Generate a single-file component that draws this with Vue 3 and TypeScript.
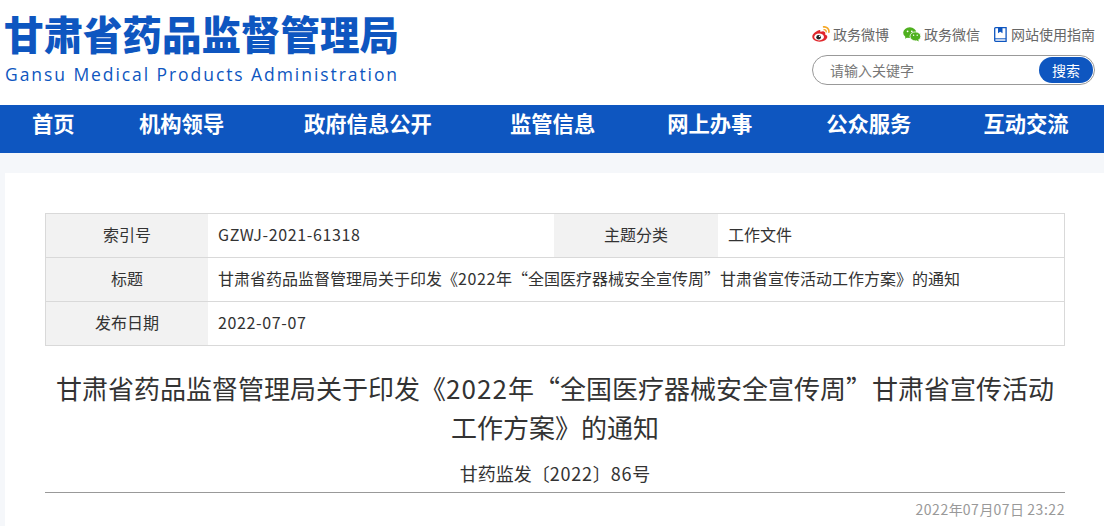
<template>
  <div class="page" lang="zh-CN">
    <header class="top">
      <div class="logo">
        <div class="logo-cn">甘肃省药品监督管理局</div>
        <div class="logo-en">Gansu Medical Products Administration</div>
      </div>
      <div class="tools">
        <div class="links">
          <a class="link">
            <svg width="18" height="16" viewBox="0 0 18 16">
              <path d="M6.800 4.300C3.200 5.500.3 8.300.3 10.800c0 2.900 3.300 4.900 7.300 4.900 4.300 0 7.700-2.400 7.700-4.900 0-1.500-1.300-2.100-2.300-2.400.6-1.400.5-2.600-1.300-3-1.200-.2-2.500.3-3.300.7.300-1.300-.4-2.500-1.600-1.800z" fill="#e0272c"/>
              <ellipse cx="7.100" cy="10.900" rx="4.900" ry="3.500" fill="#fff"/>
              <circle cx="6.600" cy="11.200" r="2.300" fill="#222"/>
              <circle cx="7.500" cy="10.400" r=".7" fill="#fff"/>
              <path d="M11.600.9c3-.4 5.800 2 5.300 5.200" fill="none" stroke="#f5a623" stroke-width="1.600" stroke-linecap="round"/>
              <path d="M12 3.700c1.300-.2 2.400.9 2.200 2.200" fill="none" stroke="#f5a623" stroke-width="1.300" stroke-linecap="round"/>
            </svg>
            <span>政务微博</span>
          </a>
          <a class="link">
            <svg width="18" height="15" viewBox="0 0 18 15">
              <ellipse cx="6.800" cy="5.700" rx="6.600" ry="5.400" fill="#4fb01f"/>
              <path d="M2.600 9l-.6 2.800 3-1.700z" fill="#4fb01f"/>
              <ellipse cx="12.400" cy="9.400" rx="5.400" ry="4.500" fill="#4fb01f" stroke="#fff" stroke-width=".8"/>
              <path d="M15 12.500l1 2-2.600-1.200z" fill="#4fb01f"/>
              <circle cx="4.600" cy="4.300" r=".9" fill="#fff"/>
              <circle cx="8.800" cy="4.300" r=".9" fill="#fff"/>
              <circle cx="10.600" cy="8.300" r=".7" fill="#fff"/>
              <circle cx="14.200" cy="8.300" r=".7" fill="#fff"/>
            </svg>
            <span>政务微信</span>
          </a>
          <a class="link">
            <svg width="13" height="15" viewBox="0 0 13 15">
              <path d="M1.600.7h10.500v13.600H1.600c-.5 0-.9-.4-.9-.9V1.600c0-.5.400-.9.900-.9z" fill="none" stroke="#0e56c0" stroke-width="1.300"/>
              <path d="M4 .7h4.500v5.600L6.200 4.800 4 6.300z" fill="#0e56c0"/>
              <path d="M1 11.800h11" stroke="#0e56c0" stroke-width="1"/>
            </svg>
            <span>网站使用指南</span>
          </a>
        </div>
        <div class="search">
          <span class="placeholder">请输入关键字</span>
          <button class="search-btn">搜索</button>
        </div>
      </div>
    </header>

    <nav class="nav">
      <a v-for="item in navItems" :key="item" class="nav-item">{{ item }}</a>
    </nav>

    <main class="main">
      <section class="card">
        <div class="meta">
          <div class="meta-row">
            <div class="meta-label">索引号</div>
            <div class="meta-value half"><span class="num">GZWJ-2021-61318</span></div>
            <div class="meta-label second">主题分类</div>
            <div class="meta-value">工作文件</div>
          </div>
          <div class="meta-row">
            <div class="meta-label">标题</div>
            <div class="meta-value">
              <span>甘肃省药品监督管理局关于印发《<span class="num">2022</span>年“全国医疗器械安全宣传周”甘肃省宣传活动工作方案》的通知</span>
            </div>
          </div>
          <div class="meta-row">
            <div class="meta-label">发布日期</div>
            <div class="meta-value"><span class="num">2022-07-07</span></div>
          </div>
        </div>

        <h1 class="title">甘肃省药品监督管理局关于印发《<span class="num">2022</span>年“全国医疗器械安全宣传周”甘肃省宣传活动工作方案》的通知</h1>
        <div class="doc-no">甘药监发〔<span class="num">2022</span>〕<span class="num">86</span>号</div>
        <div class="date"><span class="num">2022</span>年<span class="num">07</span>月<span class="num">07</span>日 <span class="num">23:22</span></div>
      </section>
    </main>
  </div>
</template>

<script setup lang="ts">
const navItems: string[] = ['首页', '机构领导', '政府信息公开', '监管信息', '网上办事', '公众服务', '互动交流']
</script>

<style>
html,
body {
  margin: 0;
  background: #f5f7fa;
  overflow: hidden;
}
</style>

<style scoped>
.page {
  width: 1104px;
  height: 526px;
  overflow: hidden;
  font-family: "Noto Sans CJK SC", "Open Sans", sans-serif;
  background: #f5f7fa;
}

.top {
  height: 105px;
  background: #fff;
  display: flex;
  justify-content: space-between;
  box-sizing: border-box;
  padding: 0 9px 0 5px;
}

.logo-cn {
  margin-top: 7px;
  margin-left: -1px;
  font-size: 39.500px;
  line-height: 52px;
  font-weight: 900;
  color: #0e56c0;
  white-space: nowrap;
}

.logo-en {
  margin-top: 3px;
  font-family: "Open Sans", sans-serif;
  font-size: 17.500px;
  line-height: 24px;
  letter-spacing: 1.930px;
  color: #0e56c0;
  white-space: nowrap;
}

.tools {
  width: 283px;
  padding-top: 25px;
}

.links {
  display: flex;
  height: 18px;
  font-size: 14px;
  line-height: 18px;
  color: #666;
}

.link {
  display: flex;
  align-items: center;
  gap: 3px;
  white-space: nowrap;
  margin-right: 14px;
}

.link:last-child {
  margin-right: 0;
  gap: 4px;
}

.search {
  margin-top: 12px;
  height: 30px;
  box-sizing: border-box;
  border: 1px solid #999;
  border-radius: 15px;
  display: flex;
  align-items: center;
  justify-content: space-between;
  padding: 0 1px 0 17px;
}

.placeholder {
  font-size: 14px;
  color: #777;
}

.search-btn {
  width: 54px;
  height: 26px;
  border: 0;
  padding: 0;
  border-radius: 13px;
  background: #0e56c0;
  color: #fff;
  font-family: inherit;
  font-size: 14px;
}

.nav {
  height: 48px;
  background: #0e56c0;
  display: flex;
  padding-left: 32px;
  box-sizing: border-box;
}

.nav-item {
  font-size: 21.300px;
  line-height: 36px;
  font-weight: 700;
  color: #fff;
  white-space: nowrap;
  margin-right: 72px;
}

.nav-item:nth-child(1) {
  margin-right: 64.400px;
}

.nav-item:nth-child(2) {
  margin-right: 79.800px;
}

.nav-item:nth-child(3) {
  margin-right: 78.200px;
}

.nav-item:nth-child(5) {
  margin-right: 73.800px;
}

.main {
  padding: 20px 0 0 5px;
}

.card {
  background: #fff;
  height: 353px;
  padding: 40px 39px 0 40px;
}

.meta {
  border: 1px solid #d9d9d9;
  border-bottom: 0;
}

.meta-row {
  display: flex;
  height: 44px;
  box-sizing: border-box;
  border-bottom: 1px solid #d9d9d9;
  font-size: 16px;
  color: #333;
}

.meta-label {
  width: 162px;
  flex: none;
  background: #f2f2f2;
  display: flex;
  align-items: center;
  justify-content: center;
  padding-bottom: 4px;
  box-sizing: border-box;
}

.meta-label.second {
  width: 164px;
}

.meta-value {
  flex: 1;
  display: flex;
  align-items: center;
  padding: 0 0 4px 10px;
  white-space: nowrap;
}

.meta-value.half {
  flex: none;
  width: 346px;
  box-sizing: border-box;
}

.num {
  letter-spacing: 0.04em;
}

.title {
  margin: 22px 0 0;
  padding: 0 8px;
  font-size: 26px;
  line-height: 39px;
  font-weight: 400;
  color: #333;
  text-align: center;
}

.doc-no {
  margin-top: 14px;
  font-size: 18px;
  line-height: 27px;
  color: #333;
  text-align: center;
  padding-bottom: 5px;
  border-bottom: 1px solid #999;
}

.date {
  margin-top: 6px;
  font-size: 14px;
  line-height: 20px;
  color: #999;
  text-align: right;
}
</style>
